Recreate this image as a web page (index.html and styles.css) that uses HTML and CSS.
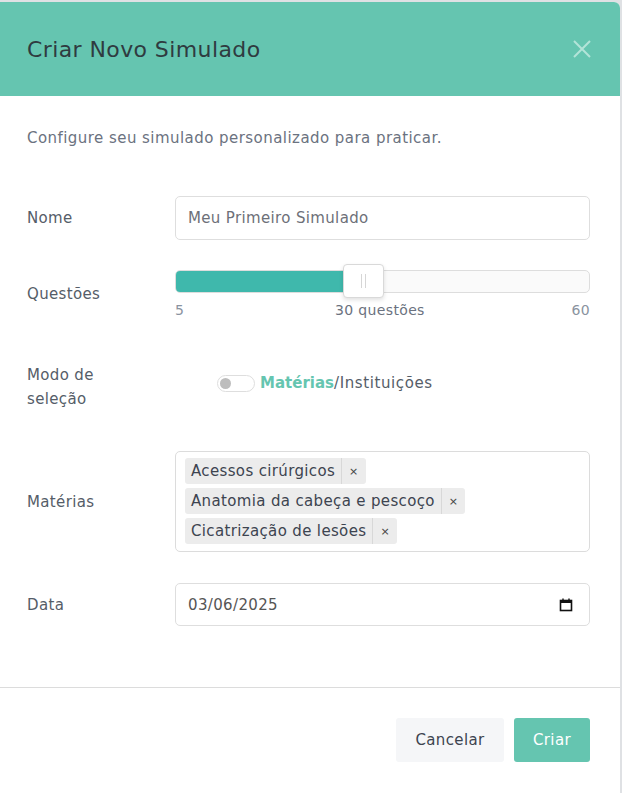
FILE: index.html
```html
<!DOCTYPE html>
<html lang="pt">
<head>
  <meta charset="UTF-8">
  <title>Criar Novo Simulado</title>
  <link rel="stylesheet" href="styles.css">
</head>
<body>
<div class="modal">
  <div class="modal-header">
    <h2 class="modal-title">Criar Novo Simulado</h2>
    <button type="button" class="close-btn" aria-label="Fechar">
      <svg width="18" height="18" viewBox="0 0 18 18"><path d="M1 1L17 17M17 1L1 17" stroke="currentColor" stroke-width="2"/></svg>
    </button>
  </div>
  <div class="modal-body">
    <p class="intro">Configure seu simulado personalizado para praticar.</p>

    <div class="form-row">
      <label class="row-label" for="nome">Nome</label>
      <input class="text-input" type="text" id="nome" placeholder="Meu Primeiro Simulado">
    </div>

    <div class="form-row row-slider">
      <span class="row-label">Questões</span>
      <div class="slider">
        <div class="slider-track">
          <div class="slider-fill"></div>
          <div class="slider-thumb"><span></span><span></span></div>
        </div>
        <div class="slider-scale">
          <span>5</span>
          <span class="scale-value">30 questões</span>
          <span>60</span>
        </div>
      </div>
    </div>

    <div class="form-row row-mode">
      <span class="row-label">Modo de<br>seleção</span>
      <div class="mode">
        <span class="toggle"><span class="toggle-knob"></span></span>
        <span class="mode-on">Matérias</span><span class="mode-off">/Instituições</span>
      </div>
    </div>

    <div class="form-row row-tags">
      <span class="row-label">Matérias</span>
      <div class="tag-box">
        <span class="tag">Acessos cirúrgicos<span class="tag-x">×</span></span>
        <span class="tag">Anatomia da cabeça e pescoço<span class="tag-x">×</span></span>
        <span class="tag">Cicatrização de lesões<span class="tag-x">×</span></span>
      </div>
    </div>

    <div class="form-row">
      <label class="row-label" for="data">Data</label>
      <div class="text-input date-input">
        <span>03/06/2025</span>
        <svg width="14" height="14" viewBox="0 0 14 14"><rect x="1.5" y="2.5" width="11" height="10" fill="none" stroke="#111" stroke-width="1.6"/><rect x="1.5" y="2.5" width="11" height="2.5" fill="#111"/><path d="M4 0.5v2.5M10 0.5v2.5" stroke="#111" stroke-width="1.4"/></svg>
      </div>
    </div>
  </div>
  <div class="modal-footer">
    <button type="button" class="btn btn-light">Cancelar</button>
    <button type="button" class="btn btn-primary">Criar</button>
  </div>
</div>
</body>
</html>
```

FILE: styles.css
```css
body {
  margin: 0;
  padding: 0;
  background-color: #dfe1e4;
  font-family: "DejaVu Sans", "Open Sans", sans-serif;
  color: #3d4450;
  letter-spacing: 0.35px;
}

.modal {
  margin-top: 2px;
  width: 620px;
  background-color: #fff;
  border-top-right-radius: 6px;
}

.modal-header {
  height: 94px;
  background-color: #65c5b0;
  border-top-right-radius: 6px;
  display: flex;
  align-items: center;
  justify-content: space-between;
  padding: 0 27px;
  box-sizing: border-box;
}

.modal-title {
  margin: 0;
  font-size: 22px;
  font-weight: normal;
  color: #2f3b40;
  letter-spacing: 0.4px;
}

.close-btn {
  background: none;
  border: none;
  padding: 0;
  margin-right: 2px;
  color: #b3e4d8;
  display: flex;
}

.modal-body {
  padding: 0 30px 31px 27px;
}

.intro {
  margin: 0;
  padding: 32px 0 48px;
  font-size: 15px;
  line-height: 20px;
  color: #6b7280;
  letter-spacing: 0.45px;
}

.form-row {
  display: flex;
  align-items: center;
  margin-bottom: 30px;
}

.row-label {
  width: 148px;
  flex-shrink: 0;
  font-size: 15px;
  color: #555d68;
  line-height: 24px;
}

.text-input {
  flex: 1;
  height: 44px;
  box-sizing: border-box;
  border: 1px solid #dedede;
  border-radius: 5px;
  padding: 0 12px;
  font-family: inherit;
  font-size: 15px;
  letter-spacing: 0.35px;
  color: #555;
}

.text-input::placeholder {
  color: #6d7078;
}

.row-slider {
  margin-bottom: 45px;
}

.slider {
  flex: 1;
}

.slider-track {
  position: relative;
  height: 23px;
  border: 1px solid #dddddd;
  border-radius: 5px;
  background-color: #fafafa;
  box-sizing: border-box;
}

.slider-fill {
  width: 43%;
  height: 100%;
  background-color: #3fb8ac;
  border-radius: 4px 0 0 4px;
}

.slider-thumb {
  position: absolute;
  left: 167px;
  top: -7px;
  width: 41px;
  height: 34px;
  box-sizing: border-box;
  background-color: #fff;
  border: 1px solid #d9d9d9;
  border-radius: 4px;
  box-shadow: 0 2px 4px rgba(0, 0, 0, 0.12);
  display: flex;
  justify-content: center;
  align-items: center;
  gap: 3px;
}

.slider-thumb span {
  width: 1px;
  height: 14px;
  background-color: #d6d6d6;
}

.slider-scale {
  display: flex;
  justify-content: space-between;
  margin-top: 9px;
  font-size: 14px;
  line-height: 16px;
  color: #8a93a0;
}

.scale-value {
  color: #6b7280;
  margin-left: 4px;
}

.row-mode {
  margin-bottom: 40px;
}

.mode {
  display: flex;
  align-items: center;
  padding-left: 42px;
  font-size: 15px;
  margin-top: -8px;
}

.toggle {
  width: 34px;
  height: 15px;
  border: 1px solid #dedede;
  border-radius: 9px;
  margin-right: 5px;
  display: flex;
  align-items: center;
  padding-left: 2px;
}

.toggle-knob {
  width: 11px;
  height: 11px;
  border-radius: 50%;
  background-color: #bdbdbd;
}

.mode-on {
  color: #65c5b0;
  font-weight: bold;
  letter-spacing: 0;
}

.mode-off {
  color: #555d68;
  letter-spacing: 0.6px;
}

.row-tags {
  margin-bottom: 31px;
}

.tag-box {
  flex: 1;
  border: 1px solid #dcdcdc;
  border-radius: 5px;
  padding: 6px 9px 7px;
  display: flex;
  flex-direction: column;
  align-items: flex-start;
  gap: 4px;
}

.tag {
  display: inline-flex;
  align-items: center;
  height: 26px;
  background-color: #ececec;
  border-radius: 3px;
  padding-left: 6px;
  font-size: 15px;
  color: #3d4450;
}

.tag-x {
  height: 100%;
  display: flex;
  align-items: center;
  margin-left: 6px;
  padding: 0 7px 0 7px;
  border-left: 1px solid #d8d8d8;
  font-size: 11px;
  color: #444;
}

.date-input {
  height: 43px;
  display: flex;
  align-items: center;
  justify-content: space-between;
  padding-right: 16px;
}

.modal-footer {
  height: 106px;
  border-top: 1px solid #dcdcdc;
  display: flex;
  justify-content: flex-end;
  align-items: flex-start;
  padding: 30px 30px 0 0;
  box-sizing: border-box;
  gap: 10px;
}

.btn {
  height: 44px;
  border: none;
  border-radius: 3px;
  font-family: inherit;
  font-size: 15px;
  letter-spacing: 0.35px;
  padding: 0;
}

.btn-light {
  background-color: #f5f6f8;
  color: #3d4450;
  width: 108px;
}

.btn-primary {
  background-color: #65c5b0;
  color: #fff;
  width: 76px;
}
```
